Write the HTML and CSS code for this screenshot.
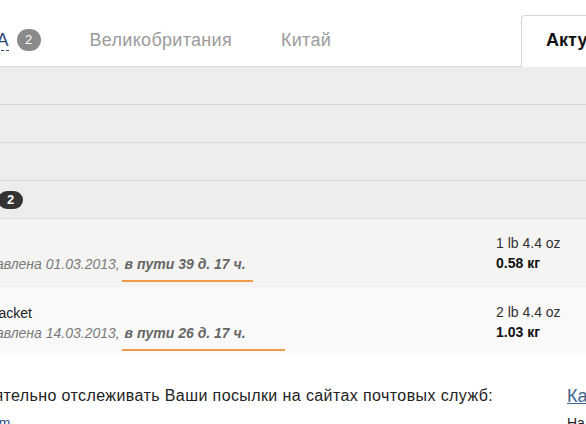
FILE: index.html
```html
<!DOCTYPE html>
<html>
  <head>
    <title>Мои посылки</title>
    <meta charset="UTF-8">
    <link rel="stylesheet" href="styles.css">
  </head>
  <body>
    <div class="page">
      <nav class="tabs">
        <div class="tab tab-current"><span class="tab-link">США</span><span class="tab-count">2</span></div>
        <div class="tab">Великобритания</div>
        <div class="tab">Китай</div>
        <div class="tab tab-active">Актуальные</div>
      </nav>

      <div class="groups">
        <div class="group"></div>
        <div class="group"></div>
        <div class="group"></div>
        <div class="group"><span class="group-count">2</span></div>
      </div>

      <div class="parcels">
        <div class="parcel">
          <div class="parcel-info">
            <div class="parcel-name">Очки</div>
            <div class="parcel-date">Отправлена 01.03.2013, <span class="transit">в пути 39 д. 17 ч.<span class="transit-bar" style="width:131px"></span></span></div>
          </div>
          <div class="parcel-weight">
            <div>1 lb 4.4 oz</div>
            <div class="kg">0.58 кг</div>
          </div>
        </div>
        <div class="parcel parcel-alt">
          <div class="parcel-info">
            <div class="parcel-name">Big Packet</div>
            <div class="parcel-date">Отправлена 14.03.2013, <span class="transit">в пути 26 д. 17 ч.<span class="transit-bar" style="width:163px"></span></span></div>
          </div>
          <div class="parcel-weight">
            <div>2 lb 4.4 oz</div>
            <div class="kg">1.03 кг</div>
          </div>
        </div>
      </div>

      <div class="footer">
        <div class="footer-main">
          <p class="footer-text">Самостоятельно отслеживать Ваши посылки на сайтах почтовых служб:</p>
          <div class="footer-links"><a href="#">www.usps.com</a></div>
        </div>
        <div class="footer-side">
          <a class="side-title" href="#">Калькулятор</a>
          <div class="side-text">На</div>
        </div>
      </div>
    </div>
  </body>
</html>
```

FILE: styles.css
```css
html {
  background: white;
}
body {
  margin: 0;
  overflow: hidden;
  font-family: "Liberation Sans", Arial, sans-serif;
  color: #222;
}
.page {
  margin-left: -35px;
  width: 760px;
}
.tabs {
  display: flex;
  align-items: flex-end;
  gap: 49px;
  height: 66px;
  padding-left: 2px;
  border-bottom: 1px solid #d6d6d6;
  font-size: 18px;
  line-height: 22px;
  white-space: nowrap;
}
.tab {
  color: #9c9c9c;
  padding-bottom: 15px;
  letter-spacing: .3px;
}
.tab-current {
  display: flex;
  align-items: center;
  letter-spacing: 0;
}
.tab-link {
  color: #2f4c78;
  border-bottom: 1px dashed #2f4c78;
  line-height: 20px;
}
.tab-count {
  display: inline-block;
  margin-left: 8px;
  min-width: 24px;
  height: 22px;
  border-radius: 11px;
  background: #8a8a8a;
  color: white;
  font-size: 13px;
  line-height: 22px;
  text-align: center;
}
.tab-active {
  margin-left: 141px;
  margin-bottom: -1px;
  padding: 13px 24px 16px;
  border: 1px solid #d6d6d6;
  border-bottom: none;
  border-radius: 4px 0 0 0;
  background: white;
  color: #111;
  font-weight: bold;
  letter-spacing: 0;
}
.groups {
  background: #ededed;
}
.group {
  display: flex;
  align-items: center;
  height: 37px;
  border-bottom: 1px solid #d9d9d9;
}
.group-count {
  margin-left: 33px;
  padding: 0 9px;
  height: 18px;
  border-radius: 9px;
  background: #333;
  color: white;
  font-size: 13px;
  font-weight: bold;
  line-height: 18px;
}
.parcel {
  display: grid;
  grid-template-columns: 531px 1fr;
  height: 68px;
  padding-top: 15px;
  box-sizing: border-box;
  background: #f4f4f2;
}
.parcel-alt {
  background: #f9f9f9;
  border-top: 1px solid #f9f9f9;
}
.parcel-info {
  font-size: 14px;
  line-height: 20px;
  white-space: nowrap;
}
.parcel-name {
  color: #222;
}
.parcel-date {
  margin-left: -7px;
  color: #7a7a7a;
  font-style: italic;
}
.transit {
  display: inline-block;
  margin-left: -2px;
  padding-left: 3px;
  color: #666;
  font-weight: bold;
}
.transit-bar {
  display: block;
  margin-top: 6px;
  margin-left: -3px;
  height: 2px;
  background: #ee9a4c;
}
.parcel-weight {
  font-size: 14px;
  line-height: 20px;
  color: #333;
  margin-top: -1px;
}
.kg {
  color: #111;
  font-weight: bold;
}
.footer {
  display: grid;
  grid-template-columns: 602px 1fr;
  padding-top: 30px;
  white-space: nowrap;
}
.footer-text {
  margin: 0 0 0 -38px;
  font-size: 16px;
  line-height: 22px;
  letter-spacing: .4px;
  color: #222;
}
.footer-links {
  margin: 7px 0 0 -48px;
  font-size: 14px;
  line-height: 18px;
}
.footer-links a {
  color: #2a4f82;
  text-decoration: none;
}
.side-title {
  display: block;
  font-size: 18px;
  line-height: 22px;
  color: #3a6390;
  margin-bottom: 7px;
}
.side-text {
  font-size: 14px;
  line-height: 18px;
  color: #222;
}
```
